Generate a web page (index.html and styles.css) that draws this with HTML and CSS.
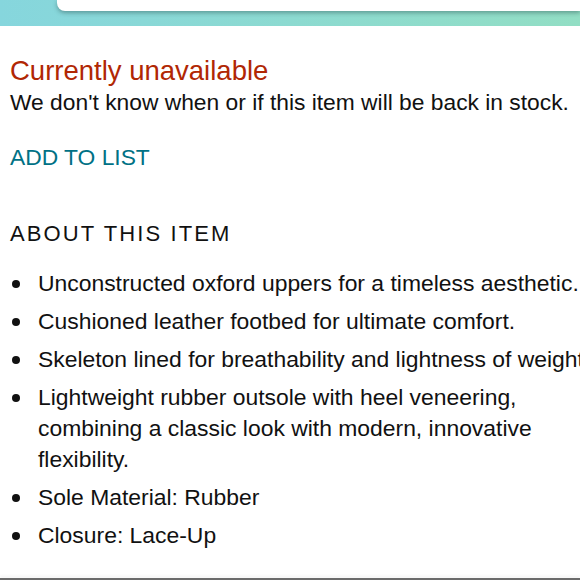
FILE: index.html
```html
<!DOCTYPE html>
<html lang="en">
<head>
  <meta charset="UTF-8">
  <title>Item details</title>
  <link rel="stylesheet" href="styles.css">
</head>
<body>
  <div class="top-band">
    <div class="top-card"></div>
  </div>

  <div class="content">
    <div class="availability">
      <h3 class="unavailable">Currently unavailable</h3>
      <p class="stock-note">We don't know when or if this item will be back in stock.</p>
    </div>

    <a class="add-list" href="#">ADD TO LIST</a>

    <h2 class="about-title">ABOUT THIS ITEM</h2>
    <ul class="features">
      <li class="no-wrap">Unconstructed oxford uppers for a timeless aesthetic.</li>
      <li>Cushioned leather footbed for ultimate comfort.</li>
      <li class="no-wrap">Skeleton lined for breathability and lightness of weight.</li>
      <li>Lightweight rubber outsole with heel veneering, combining a classic look with modern, innovative flexibility.</li>
      <li>Sole Material: Rubber</li>
      <li>Closure: Lace-Up</li>
    </ul>
  </div>

  <div class="bottom-line"></div>
</body>
</html>
```

FILE: styles.css
```css
html, body {
  margin: 0;
  height: 100%;
}

body {
  font-family: 'Liberation Sans', Arial, sans-serif;
  background: #fff;
  color: #111;
  display: flex;
  flex-direction: column;
  overflow: hidden;
}

.top-band {
  height: 26px;
  background: linear-gradient(to right, #86d6dd, #92dec4);
  flex-shrink: 0;
}

.top-card {
  margin-left: 57px;
  height: 11px;
  background: #fff;
  border-bottom-left-radius: 8px;
  box-shadow: 0 2px 4px rgba(40, 80, 80, 0.45);
}

.content {
  flex: 1;
  padding: 0 10px;
  white-space: nowrap;
}

.unavailable {
  margin: 30px 0 0;
  font-size: 27.5px;
  font-weight: normal;
  color: #b12704;
  line-height: 30px;
}

.stock-note {
  margin: 2px 0 0;
  font-size: 22.8px;
  line-height: 28px;
}

.add-list {
  display: block;
  margin-top: 27px;
  font-size: 22.8px;
  line-height: 28px;
  color: #007185;
  text-decoration: none;
}

.about-title {
  margin: 49px 0 0;
  font-size: 22px;
  font-weight: normal;
  letter-spacing: 2.1px;
  line-height: 28px;
}

.features {
  margin: 20px 0 0;
  padding: 0;
  list-style: none;
  font-size: 22.9px;
  line-height: 31px;
}

.features li {
  position: relative;
  margin-bottom: 7px;
  padding-left: 28px;
  width: 520px;
  white-space: normal;
}

.features li::before {
  content: "";
  position: absolute;
  left: 2px;
  top: 12px;
  width: 8px;
  height: 8px;
  border-radius: 50%;
  background: #111;
}

.features li.no-wrap {
  white-space: nowrap;
}

.bottom-line {
  height: 2px;
  background: #6b6b6b;
  box-shadow: 0 -2px 3px rgba(0, 0, 0, 0.06);
  flex-shrink: 0;
}
```
